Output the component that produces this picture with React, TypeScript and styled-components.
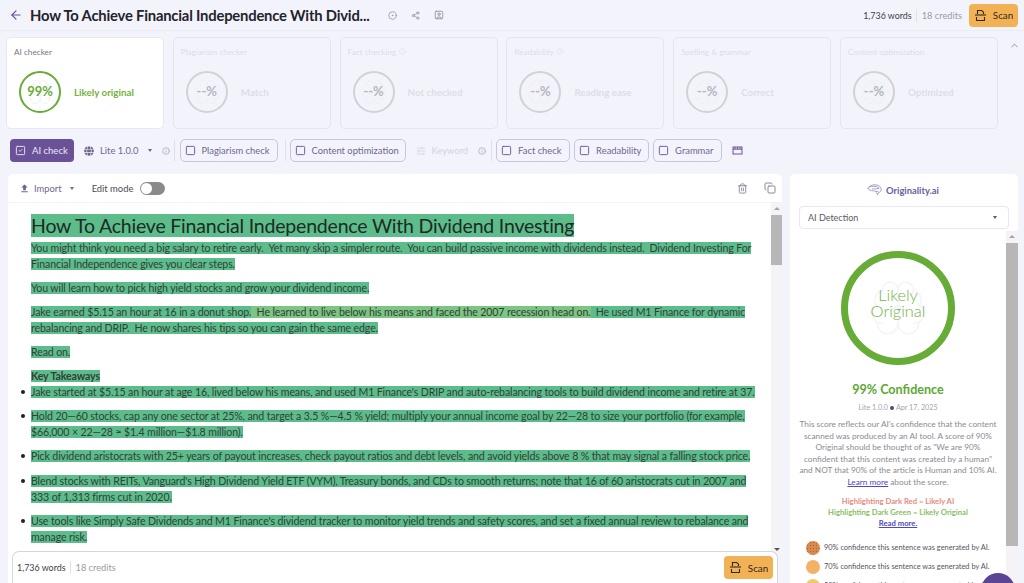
import React from 'react'
import styled, { createGlobalStyle } from 'styled-components'
import { ArrowLeft, ChevronUp, CircleDot, Copy, Info, Share2, SlidersHorizontal, SquareUser, Brain, SquareCheck, Square, Trash2 } from 'lucide-react'
import { MdFileUpload } from 'react-icons/md'
import { FaGlobe } from 'react-icons/fa'

const GlobalStyle = createGlobalStyle`
  html, body { margin: 0; padding: 0; height: 100%; overflow: hidden; }
  body {
    background: #f3f4fb;
    font-family: "Lato", "Open Sans", sans-serif;
    color: #2b2b33;
  }
  * { box-sizing: border-box; }
`

const Page = styled.div`
  width: 1024px;
  height: 583px;
  display: flex;
  flex-direction: column;
  overflow: hidden;
  position: relative;
`

const Header = styled.header`
  height: 31px;
  flex: none;
  display: flex;
  align-items: center;
  padding: 0 6px 0 9px;
  border-bottom: 1px solid #ebebf4;
`

const Title = styled.h1`
  margin: 0 0 0 7px;
  width: 345px;
  flex: none;
  font-size: 14.8px;
  font-weight: 700;
  color: #23232b;
  white-space: nowrap;
  letter-spacing: -0.2px;
`

const HeadIcons = styled.div`
  display: flex;
  align-items: center;
  gap: 14px;
  margin-left: 13px;
  color: #8f8f9c;
`

const Spacer = styled.div`
  flex: 1;
`

const Words = styled.span`
  font-size: 8.9px;
  color: #3e3e48;
  padding-right: 4px;
  border-right: 1px solid #e1e1ea;
  line-height: 13px;
`

const Credits = styled.span`
  font-size: 9.25px;
  color: #9a9aa4;
  padding-left: 5px;
`

const ScanButton = styled.button`
  display: flex;
  align-items: center;
  justify-content: center;
  gap: 6px;
  width: 49px;
  height: 23px;
  margin-left: 7px;
  padding: 0;
  border: 0;
  border-radius: 4px;
  background: #f3b155;
  color: #2e2a22;
  font: inherit;
  font-size: 9.8px;
`

const Cards = styled.section`
  display: flex;
  align-items: flex-start;
  gap: 8.8px;
  padding: 6px 0 0 6px;
  flex: none;
`

const Card = styled.div<{ $active?: boolean }>`
  width: 158px;
  height: 92px;
  flex: none;
  border-radius: 5px;
  border: 1px solid ${p => (p.$active ? '#e8e8f2' : '#e5e5ef')};
  background: ${p => (p.$active ? '#ffffff' : 'transparent')};
  padding: 8px 13px 0 7px;
`

const CardLabel = styled.div<{ $active?: boolean }>`
  display: flex;
  align-items: center;
  gap: 3px;
  height: 11px;
  font-size: 8.2px;
  color: ${p => (p.$active ? '#77777f' : '#dcdce6')};
`

const CardBody = styled.div`
  display: flex;
  align-items: center;
  gap: 13px;
  margin: 14px 0 0 5px;
`

const Ring = styled.div<{ $active?: boolean }>`
  position: relative;
  width: 42px;
  height: 42px;
  flex: none;
  display: flex;
  align-items: center;
  justify-content: center;
  border-radius: 50%;
  border: 2px solid ${p => (p.$active ? '#66ac36' : '#d1d1d6')};
  color: ${p => (p.$active ? '#66ac36' : '#b5b5bd')};
  font-size: 13px;
  font-weight: 700;
  padding-bottom: 2px;
`

const RingBrain = styled(Brain)`
  position: absolute;
  left: 5px;
  top: 5px;
  color: #eeeef3;
`

const RingText = styled.span`
  position: relative;
`

const CardResult = styled.span<{ $active?: boolean }>`
  font-size: 9.8px;
  font-weight: 700;
  color: ${p => (p.$active ? '#74b23e' : '#dddde6')};
`

const Collapse = styled.div`
  flex: none;
  margin: 3px 0 0 2px;
  color: #8d84b8;
  display: flex;
`

const Toolbar = styled.div`
  display: flex;
  align-items: center;
  height: 23px;
  margin: 10px 0 0 10px;
  flex: none;
`

const PrimaryCheck = styled.button`
  display: flex;
  align-items: center;
  gap: 6px;
  width: 64px;
  height: 23px;
  flex: none;
  padding: 0 0 0 5px;
  border: 0;
  border-radius: 4px;
  background: #6a5299;
  color: #ece8f5;
  font: inherit;
  font-size: 9.5px;
`

const Version = styled.div`
  display: flex;
  align-items: center;
  margin-left: 10px;
  font-size: 9.4px;
  color: #6f6690;
`

const VersionText = styled.span`
  margin-left: 6px;
  white-space: nowrap;
`

const Caret = styled.span<{ $ml: number }>`
  width: 0;
  height: 0;
  flex: none;
  margin-left: ${p => p.$ml}px;
  border-left: 2.5px solid transparent;
  border-right: 2.5px solid transparent;
  border-top: 3px solid currentColor;
`

const InfoMark = styled(Info)<{ $ml: number }>`
  margin-left: ${p => p.$ml}px;
  flex: none;
  color: #9d9db0;
`

const Divider = styled.span<{ $m: string }>`
  width: 1px;
  height: 21px;
  flex: none;
  background: #dfdfea;
  margin: ${p => p.$m};
`

const CheckButton = styled.button<{ $w: number; $ml?: number }>`
  display: flex;
  align-items: center;
  gap: 6px;
  width: ${p => p.$w}px;
  height: 23px;
  flex: none;
  margin-left: ${p => p.$ml ?? 0}px;
  padding: 0 0 0 4px;
  border: 1px solid #c9c5de;
  border-radius: 5px;
  background: transparent;
  color: #6f6690;
  font: inherit;
  font-size: 9.4px;
  white-space: nowrap;

  svg {
    color: #6a5299;
  }
`

const Keyword = styled.div`
  display: flex;
  align-items: center;
  gap: 6px;
  margin-left: 10px;
  font-size: 9.4px;
  color: #d2d2de;
`

const CalendarIcon = styled.svg`
  margin-left: 10px;
  flex: none;
  color: #6a5299;
`

const Main = styled.main`
  flex: 1;
  min-height: 0;
  display: flex;
  gap: 8px;
  margin: 12px 6px 0 8px;
`

const Editor = styled.section`
  width: 774px;
  flex: none;
  display: flex;
  flex-direction: column;
  background: #fff;
  border-radius: 5px 5px 0 0;
  position: relative;
`

const EditorTop = styled.div`
  height: 29px;
  flex: none;
  display: flex;
  align-items: center;
  padding: 0 6px 0 11px;
  border-bottom: 1px solid #f2f2f6;
  color: #6f6690;
  font-size: 9.4px;
`

const ImportText = styled.span`
  margin-left: 4px;
`

const EditLabel = styled.span`
  margin-left: 18px;
  color: #4b4b55;
`

const Toggle = styled.span`
  width: 25px;
  height: 13px;
  margin-left: 7px;
  padding: 1px;
  border-radius: 7px;
  background: #8a8a8a;
  display: flex;

  &::before {
    content: '';
    width: 11px;
    height: 11px;
    border-radius: 50%;
    background: #fff;
  }
`

const TopIcons = styled.div`
  display: flex;
  align-items: center;
  gap: 16px;
  color: #8a8a9c;
`

const EditorBody = styled.div`
  flex: 1;
  min-height: 0;
  display: flex;
`

const Doc = styled.article`
  flex: 1;
  min-width: 0;
  overflow: hidden;
  padding: 11px 0 0 23px;
  font-size: 10.6px;
  line-height: 16px;
  letter-spacing: -0.13px;
  color: #31413a;
`

const Mark = styled.mark<{ $light?: boolean }>`
  background: ${p => (p.$light ? '#7cc582' : '#5cbd8a')};
  color: inherit;
`

const DocTitle = styled.h2`
  margin: 0 0 2px;
  font-size: 19.5px;
  line-height: 24px;
  font-weight: 400;
  letter-spacing: -0.2px;
  color: #1e2a25;
  white-space: pre;
`

const Para = styled.p<{ $strong?: boolean }>`
  margin: 0 0 8px;
  white-space: pre;
  font-weight: ${p => (p.$strong ? 700 : 400)};
`

const Bullets = styled.ul`
  margin: -8px 0 0;
  padding: 0;
  list-style: none;
`

const Bullet = styled.li`
  position: relative;
  margin-bottom: 8.2px;
  white-space: pre;

  &::before {
    content: '';
    position: absolute;
    left: -10px;
    top: 6px;
    width: 4px;
    height: 4px;
    border-radius: 50%;
    background: #222;
  }
`

const Track = styled.div<{ $w: number; $bottom?: number }>`
  width: ${p => p.$w}px;
  flex: none;
  background: #f4f4f6;
  display: flex;
  flex-direction: column;
  align-items: center;
  padding: 4px 0 ${p => p.$bottom ?? 0}px;
`

const TrackArrow = styled.span`
  width: 0;
  height: 0;
  flex: none;
  border-left: 3px solid transparent;
  border-right: 3px solid transparent;
  border-bottom: 3px solid #a3a3a3;
`

const TrackArrowDown = styled.span`
  width: 0;
  height: 0;
  flex: none;
  margin-top: auto;
  border-left: 3px solid transparent;
  border-right: 3px solid transparent;
  border-top: 3px solid #555;
`

const Thumb = styled.div<{ $top: number; $h: number }>`
  width: 100%;
  height: ${p => p.$h}px;
  flex: none;
  margin-top: ${p => p.$top}px;
  background: #b7b7b7;
`

const BottomBar = styled.div`
  position: absolute;
  left: 4px;
  right: 4px;
  bottom: 0;
  height: 32px;
  display: flex;
  align-items: center;
  padding: 0 4px 0 4px;
  background: #fff;
  border: 1px solid #d5d5e0;
  border-bottom: 0;
  border-radius: 7px 7px 0 0;
`

const Side = styled.aside`
  flex: 1;
  min-width: 0;
  display: flex;
  flex-direction: column;
  background: #fff;
  border-radius: 5px 5px 0 0;
`

const Brand = styled.div`
  height: 32px;
  flex: none;
  display: flex;
  align-items: center;
  justify-content: center;
  gap: 4px;
  padding-right: 2px;
  font-size: 9.4px;
  font-weight: 700;
  color: #6a60a0;

  svg {
    color: #9a94c2;
  }
`

const Select = styled.div`
  height: 23px;
  flex: none;
  margin: 0 9px;
  display: flex;
  align-items: center;
  justify-content: space-between;
  padding: 0 11px 0 8px;
  border: 1px solid #e8e8f0;
  border-radius: 4px;
  font-size: 9px;
  color: #5a5a64;
`

const SideBody = styled.div`
  flex: 1;
  min-height: 0;
  display: flex;
  margin-top: 2px;
`

const Report = styled.div`
  flex: 1;
  min-width: 0;
  overflow: hidden;
  text-align: center;
  padding: 20px 0 0;
`

const BigRing = styled.div`
  position: relative;
  width: 114px;
  height: 114px;
  margin: 0 auto;
  padding-bottom: 10px;
  border: 7px solid #66ac36;
  border-radius: 50%;
  display: flex;
  align-items: center;
  justify-content: center;
  color: #71b545;
  font-size: 16.4px;
  line-height: 16px;
  font-weight: 300;
`

const BigBrain = styled(Brain)`
  position: absolute;
  left: 19px;
  top: 19px;
  color: #f4f4f9;
`

const BigText = styled.span`
  position: relative;
`

const Confidence = styled.div`
  margin-top: 17px;
  font-size: 12.6px;
  line-height: 16px;
  font-weight: 700;
  color: #5ca832;
`

const Meta = styled.div`
  margin-top: 5px;
  display: flex;
  justify-content: center;
  align-items: center;
  gap: 2px;
  font-size: 7.2px;
  line-height: 9px;
  color: #a5a5ad;
`

const MetaDot = styled.span`
  width: 4px;
  height: 4px;
  border-radius: 50%;
  background: #4d4a6e;
`

const Blurb = styled.p`
  margin: 7px 0 0;
  font-size: 8.25px;
  line-height: 11.5px;
  color: #8b8b93;
  white-space: nowrap;
`

const Learn = styled.a`
  color: #4f47c9;
  text-decoration: underline;
`

const Legend = styled.div`
  margin-top: 8px;
  font-size: 7.7px;
  line-height: 11.2px;
  font-weight: 700;
`

const LegendLine = styled.div<{ $color: string }>`
  color: ${p => p.$color};
`

const ConfRows = styled.div`
  margin-top: 11px;
  padding-left: 16px;
  display: flex;
  flex-direction: column;
  gap: 5px;
  text-align: left;
`

const ConfRow = styled.div`
  display: flex;
  align-items: center;
  gap: 4px;
  font-size: 7.4px;
  color: #55555e;
  white-space: nowrap;
`

const Dot = styled.span<{ $color: string; $speckled?: boolean }>`
  width: 14px;
  height: 14px;
  flex: none;
  border-radius: 50%;
  background-color: ${p => p.$color};
  background-image: ${p => (p.$speckled ? 'radial-gradient(#a9662f 0.6px, transparent 0.8px)' : 'none')};
  background-size: 3px 3px;
`

const Fab = styled.div`
  position: absolute;
  left: 981px;
  top: 573px;
  width: 34px;
  height: 34px;
  border-radius: 50%;
  background: #5a4595;
`

const ScanGlyph = () => (
  <svg width="13" height="13" viewBox="0 0 13 13" fill="none" stroke="currentColor" strokeWidth="1.1">
    <path d="M3.5 5V1.5h4.2L9.5 3.2V5" />
    <path d="M1 6h11" />
    <path d="M2.5 8v3.5h8V8" />
  </svg>
)

const BrandMark = () => (
  <svg width="15" height="12" viewBox="0 0 15 12" fill="none" stroke="currentColor" strokeWidth="0.9" strokeLinecap="round">
    <path d="M1 4.5C2 1.8 5 .8 8 .8c3.2 0 5.8 1.6 6.2 4 .3 2-1 3.5-3 3.8l-.4 2.2-1.6-2" />
    <path d="M1 4.5c.8 1.5 2.5 2.3 5 2.3" />
    <path d="M3 2.8c2-.8 5.5-.8 8.5.6" />
    <path d="M5.5 5c2 .2 4.5 0 6.5-.6" />
    <path d="M7 7c1.5.5 2.5.6 4 .4" />
  </svg>
)

const cards = [
  { label: 'AI checker', result: 'Likely original', value: '99%', active: true },
  { label: 'Plagiarism checker', result: 'Match', value: '--%' },
  { label: 'Fact checking', result: 'Not checked', value: '--%', info: true },
  { label: 'Readability', result: 'Reading ease', value: '--%', info: true },
  { label: 'Spelling & grammar', result: 'Correct', value: '--%' },
  { label: 'Content optimization', result: 'Optimized', value: '--%' },
]

const blurb = [
  'This score reflects our AI\'s confidence that the content',
  'scanned was produced by an AI tool. A score of 90%',
  'Original should be thought of as "We are 90%',
  'confident that this content was created by a human"',
  'and NOT that 90% of the article is Human and 10% AI.',
]

const bullets = [
  ['Jake started at $5.15 an hour at age 16, lived below his means, and used M1 Finance\'s DRIP and auto-rebalancing tools to build dividend income and retire at 37.'],
  ['Hold 20—60 stocks, cap any one sector at 25%, and target a 3.5 %—4.5 % yield; multiply your annual income goal by 22—28 to size your portfolio (for example,', '$66,000 × 22—28 ≈ $1.4 million—$1.8 million).'],
  ['Pick dividend aristocrats with 25+ years of payout increases, check payout ratios and debt levels, and avoid yields above 8 % that may signal a falling stock price.'],
  ['Blend stocks with REITs, Vanguard\'s High Dividend Yield ETF (VYM), Treasury bonds, and CDs to smooth returns; note that 16 of 60 aristocrats cut in 2007 and', '333 of 1,313 firms cut in 2020.'],
  ['Use tools like Simply Safe Dividends and M1 Finance\'s dividend tracker to monitor yield trends and safety scores, and set a fixed annual review to rebalance and', 'manage risk.'],
]

const App = () => {
  return (
    <Page>
      <GlobalStyle />
      <Header>
        <ArrowLeft size={14} color="#6a5299" />
        <Title>How To Achieve Financial Independence With Divid...</Title>
        <HeadIcons>
          <CircleDot size={9} />
          <Share2 size={9} />
          <SquareUser size={10} />
        </HeadIcons>
        <Spacer />
        <Words>1,736 words</Words>
        <Credits>18 credits</Credits>
        <ScanButton><ScanGlyph />Scan</ScanButton>
      </Header>

      <Cards>
        {cards.map(c => (
          <Card key={c.label} $active={c.active}>
            <CardLabel $active={c.active}>
              {c.label}
              {c.info && <Info size={7} />}
            </CardLabel>
            <CardBody>
              <Ring $active={c.active}>
                <RingBrain size={28} strokeWidth={0.7} />
                <RingText>{c.value}</RingText>
              </Ring>
              <CardResult $active={c.active}>{c.result}</CardResult>
            </CardBody>
          </Card>
        ))}
        <Collapse><ChevronUp size={11} /></Collapse>
      </Cards>

      <Toolbar>
        <PrimaryCheck><SquareCheck size={11} />AI check</PrimaryCheck>
        <Version>
          <FaGlobe size={10} />
          <VersionText>Lite 1.0.0</VersionText>
          <Caret $ml={9} />
          <InfoMark size={8} $ml={10} />
        </Version>
        <Divider $m="0 5px 0 4px" />
        <CheckButton $w={98}><Square size={11} />Plagiarism check</CheckButton>
        <Divider $m="0 4px 0 7px" />
        <CheckButton $w={116}><Square size={11} />Content optimization</CheckButton>
        <Keyword>
          <SlidersHorizontal size={10} />
          Keyword
          <InfoMark size={8} $ml={4} />
        </Keyword>
        <Divider $m="0 4px 0 5px" />
        <CheckButton $w={74}><Square size={11} />Fact check</CheckButton>
        <CheckButton $w={75} $ml={4}><Square size={11} />Readability</CheckButton>
        <CheckButton $w={69} $ml={4}><Square size={11} />Grammar</CheckButton>
        <CalendarIcon width="11" height="11" viewBox="0 0 11 11" fill="none" stroke="currentColor" strokeWidth="1">
          <rect x="1" y="2" width="9" height="7" />
          <path d="M1 4.2h9M3 2v2M5.5 2v2M8 2v2" />
        </CalendarIcon>
      </Toolbar>

      <Main>
        <Editor>
          <EditorTop>
            <MdFileUpload size={11} />
            <ImportText>Import</ImportText>
            <Caret $ml={8} />
            <EditLabel>Edit mode</EditLabel>
            <Toggle />
            <Spacer />
            <TopIcons>
              <Trash2 size={11} />
              <Copy size={12} />
            </TopIcons>
          </EditorTop>
          <EditorBody>
            <Doc>
              <DocTitle><Mark>How To Achieve Financial Independence With Dividend Investing</Mark></DocTitle>
              <Para>
                <Mark>You might think you need a big salary to retire early.  Yet many skip a simpler route.  You can build passive income with dividends instead.  Dividend Investing For</Mark>
                <br />
                <Mark>Financial Independence gives you clear steps.</Mark>
              </Para>
              <Para><Mark>You will learn how to pick high yield stocks and grow your dividend income.</Mark></Para>
              <Para>
                <Mark>Jake earned $5.15 an hour at 16 in a donut shop.</Mark>
                <Mark $light>  He learned to live below his means and faced the 2007 recession head on.</Mark>
                <Mark>  He used M1 Finance for dynamic</Mark>
                <br />
                <Mark>rebalancing and DRIP.  He now shares his tips so you can gain the same edge.</Mark>
              </Para>
              <Para><Mark>Read on.</Mark></Para>
              <Para $strong><Mark>Key Takeaways</Mark></Para>
              <Bullets>
                {bullets.map(lines => (
                  <Bullet key={lines[0]}>
                    <Mark>{lines[0]}</Mark>
                    {lines[1] && <><br /><Mark>{lines[1]}</Mark></>}
                  </Bullet>
                ))}
              </Bullets>
            </Doc>
            <Track $w={11} $bottom={32}>
              <TrackArrow />
              <Thumb $top={5} $h={50} />
              <TrackArrowDown />
            </Track>
          </EditorBody>
          <BottomBar>
            <Words>1,736 words</Words>
            <Credits>18 credits</Credits>
            <Spacer />
            <ScanButton><ScanGlyph />Scan</ScanButton>
          </BottomBar>
        </Editor>

        <Side>
          <Brand><BrandMark />Originality.ai</Brand>
          <Select>AI Detection<Caret $ml={0} /></Select>
          <SideBody>
            <Report>
              <BigRing>
                <BigBrain size={62} strokeWidth={0.6} />
                <BigText>Likely<br />Original</BigText>
              </BigRing>
              <Confidence>99% Confidence</Confidence>
              <Meta>Lite 1.0.0 <MetaDot /> Apr 17, 2025</Meta>
              <Blurb>
                {blurb.map(line => <React.Fragment key={line}>{line}<br /></React.Fragment>)}
                <Learn>Learn more</Learn> about the score.
              </Blurb>
              <Legend>
                <LegendLine $color="#e88b7d">Highlighting Dark Red = Likely AI</LegendLine>
                <LegendLine $color="#86bf63">Highlighting Dark Green = Likely Original</LegendLine>
                <Learn>Read more.</Learn>
              </Legend>
              <ConfRows>
                <ConfRow><Dot $color="#d98a50" $speckled />90% confidence this sentence was generated by AI.</ConfRow>
                <ConfRow><Dot $color="#f3b266" />70% confidence this sentence was generated by AI.</ConfRow>
                <ConfRow><Dot $color="#f5c572" />50% confidence this sentence was generated by AI.</ConfRow>
              </ConfRows>
            </Report>
            <Track $w={12}>
              <TrackArrow />
              <Thumb $top={5} $h={303} />
            </Track>
          </SideBody>
        </Side>
      </Main>
      <Fab />
    </Page>
  )
}

export default App
